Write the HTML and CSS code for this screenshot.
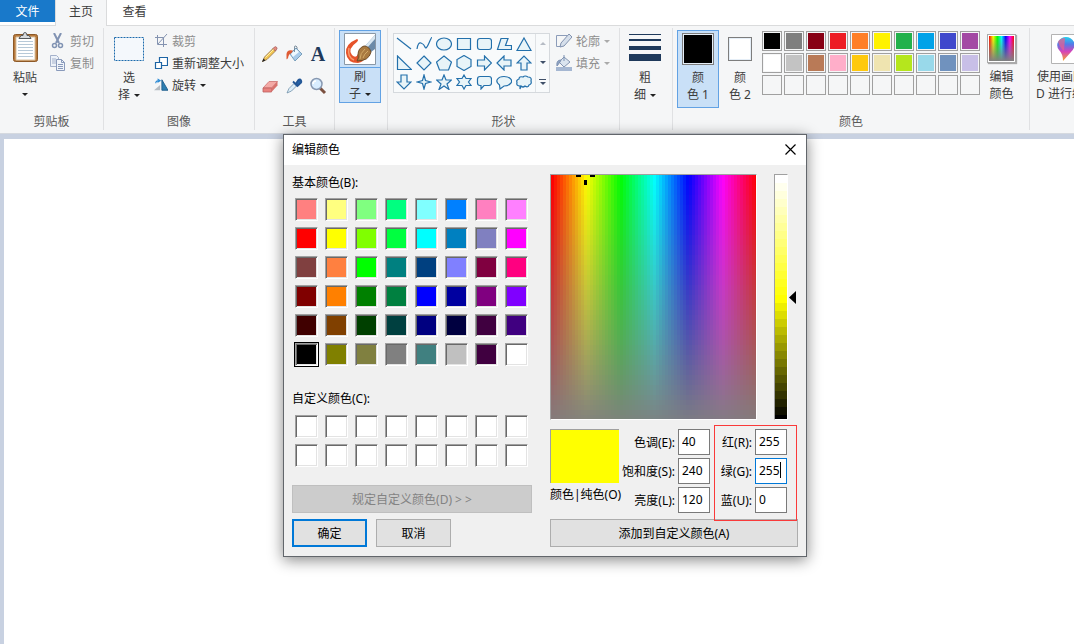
FILE: index.html
```html
<!DOCTYPE html>
<html lang="zh-CN">
<head>
<meta charset="utf-8">
<title>画图</title>
<link rel="stylesheet" href="styles.css">
</head>
<body>
<nav class="tabs">
  <button class="tab tab-file">文件</button>
  <button class="tab tab-active">主页</button>
  <button class="tab">查看</button>
</nav>

<header class="ribbon">
  <section class="group g-clipboard">
    <div class="tools">
      <button class="big">
        <svg class="icon-big" width="32" height="34" viewBox="0 0 32 34"><rect x="4.500" y="4.500" width="24" height="27" rx="2" fill="#b87a3d" stroke="#8d5927"/><path d="M7 7h19v23H7z" fill="#fff" stroke="#d9c3a4"/><path d="M9 11.500h15M9 14.500h15M9 17.500h15M9 20.500h15M9 23.500h15M9 26.500h15" stroke="#b7c9d8"/><path d="M10 8.500h12l-2-3h-2q0-3-2-3t-2 3h-2z" fill="#d6d9dc" stroke="#54585c"/></svg>
        <span>粘贴</span><i class="caret"></i>
      </button>
      <div class="rows">
        <button class="row off"><svg width="16" height="16" viewBox="0 0 16 16" fill="none"><path d="M4 0l5 10M11 0L6 10" stroke="#8193b3" stroke-width="2"/><circle cx="4.500" cy="12.500" r="2" stroke="#8193b3" stroke-width="1.500"/><circle cx="10.500" cy="12.500" r="2" stroke="#8193b3" stroke-width="1.500"/></svg>剪切</button>
        <button class="row off"><svg width="16" height="16" viewBox="0 0 16 16"><path d="M.5.500h6l2 2v9h-8z" fill="#edf2f9" stroke="#a4b1cb"/><path d="M2 4h4M2 6h4M2 8h4" stroke="#a4b1cb"/><path d="M6.500 4.500h5l3 3v8h-8z" fill="#f0f4fa" stroke="#899abb"/><path d="M11.500 4.500v3h3M8 9.500h5M8 11.500h5M8 13.500h5" fill="none" stroke="#899abb"/></svg>复制</button>
      </div>
    </div>
    <h2>剪贴板</h2>
  </section>

  <section class="group g-image">
    <div class="tools">
      <button class="big">
        <svg class="icon-big" width="32" height="34" viewBox="0 0 32 34"><rect x="1.500" y="7.500" width="29" height="23" fill="#f4f8fc" stroke="#1c6aac" stroke-dasharray="2 1"/></svg>
        <span>选</span><span>择<i class="caret"></i></span>
      </button>
      <div class="rows">
        <button class="row off"><svg width="14" height="14" viewBox="0 0 14 14" fill="none" stroke="#8493b0"><path d="M3.500 1v9.500H13M1 3.500h8.500V13M13 0L4 10"/></svg>裁剪</button>
        <button class="row"><svg width="14" height="14" viewBox="0 0 14 14" fill="#fff" stroke="#1d64a4" stroke-width="1.200"><path d="M5.500 1.500h8v8h-8z"/><path d="M1.500 6.500h6v6h-6z"/></svg>重新调整大小</button>
        <button class="row"><svg width="14" height="14" viewBox="0 0 16 14"><path d="M0 13L7 7v6z" fill="#b5bbc1"/><path d="M9 1v12h7z" fill="#2d7eb1" stroke="#1b5b8b"/><path d="M2 5q0-3 4-3M4 0l3 2-3 2" fill="none" stroke="#2788d4" stroke-width="1.300"/></svg>旋转<i class="caret"></i></button>
      </div>
    </div>
    <h2>图像</h2>
  </section>

  <section class="group g-tools">
    <div class="tools toolgrid">
      <button aria-label="铅笔"><svg width="18" height="18" viewBox="0 0 18 18"><path d="M1.500 16.500l2-4.500L12 3.500l2.500 2.500L6 14.500z" fill="#f2c552" stroke="#92734c" stroke-width=".8"/><path d="M1 17l1.500-3.500 2 2z" fill="#222"/><path d="M12 3.500l1.500-1.500q1-.8 2 .2t.2 2L14.500 6z" fill="#e58d80" stroke="#a55b59" stroke-width=".8"/><path d="M4.500 12.500l8-8" stroke="#fff1a8"/></svg></button>
      <button aria-label="填充"><svg width="18" height="18" viewBox="0 0 18 18"><path d="M5 9l6-6 6 6-7 7z" fill="#a9cbe9" stroke="#658fae" stroke-width=".8"/><path d="M6 9l5-5 3 3-6 5z" fill="#eff9ff"/><path d="M9.500 7V2q0-1.500 1.500-1t1 3" fill="none" stroke="#637a8b" stroke-width=".8"/><path d="M8 5.500Q2 4 1.500 9v5q1.500 1 2-3 .5-2 3-3z" fill="#df5b34"/></svg></button>
      <button class="letter" aria-label="文本">A</button>
      <button aria-label="橡皮擦"><svg width="18" height="18" viewBox="0 0 18 18"><path d="M2 11l6-6.500h8.500L10.500 11z" fill="#f4aaa6" stroke="#cd7171" stroke-width=".8"/><path d="M2 11h8.500v4H2z" fill="#e9827e" stroke="#bd6161" stroke-width=".8"/><path d="M10.500 11l6-6.500v4l-6 6.500z" fill="#d8736e"/></svg></button>
      <button aria-label="取色器"><svg width="18" height="18" viewBox="0 0 18 18"><path d="M2 16l2-4.500 5-5 2.500 2.500-5 5z" fill="#dfeffa" stroke="#6e8fa8" stroke-width=".8"/><path d="M8 4.500l5 5M11 6.500l2-3q2-2 3 0t-1 3l-2 2z" fill="#2866ac" stroke="#245796" stroke-width="1.800"/></svg></button>
      <button aria-label="放大镜"><svg width="18" height="18" viewBox="0 0 18 18"><path d="M11 11l5 5" stroke="#7b5140" stroke-width="3"/><circle cx="7.500" cy="7" r="5.500" fill="#d8edff" stroke="#8798b1" stroke-width="1.500"/><path d="M4 7q0-3 3-3" fill="none" stroke="#fff" stroke-width="1.500"/></svg></button>
    </div>
    <h2>工具</h2>
  </section>

  <section class="group g-brush">
    <button class="split">
      <span class="split-top"><svg width="32" height="32" viewBox="0 0 32 32"><path d="M.5.500h31v31H.5z" fill="#fff" stroke="#8a98a6"/><path d="M13 6Q1 11 2 20q1 10 12 10 6-1 6-5l-6-4q-2 5-6 1-5-6 5-13 2-2 0-3z" fill="#e6532a"/><path d="M5 15q-2 9 5 12" fill="none" stroke="#f79a6c" stroke-width="1.500"/><path d="M31 2v14l-4 3-6-6z" fill="#6b8aa8"/><path d="M31 2L21 13l2 2 8-9z" fill="#d9e7f1"/><path d="M20 13q5 0 7 6-2 9-14 9 2-3 1-6 0-7 6-9z" fill="#a97a40" stroke="#6d4b26"/><path d="M16 26q0-6 5-10M19 25q1-4 5-7" fill="none" stroke="#d3aa67"/></svg></span>
      <span>刷</span><span>子<i class="caret"></i></span>
    </button>
  </section>

  <section class="group g-shapes">
    <div class="tools">
      <div class="gallery">
        <div class="shapes" id="shapes"></div>
        <div class="scroll">
          <button aria-label="向上"><i class="caret up"></i></button>
          <button aria-label="向下"><i class="caret slate"></i></button>
          <button aria-label="更多"><i class="more"></i><i class="caret slate"></i></button>
        </div>
      </div>
      <div class="rows">
        <button class="row off"><svg width="16" height="16" viewBox="0 0 16 16"><path d="M11 2.500H.5v11h4" fill="none" stroke="#8c9cb9"/><path d="M4 14l1-4 8-9 3 3-8 9z" fill="#d6dfeb" stroke="#8292af"/></svg>轮廓<i class="caret"></i></button>
        <button class="row off"><svg width="16" height="16" viewBox="0 0 16 16"><path d="M3 7l5-5 6 5-6 5z" fill="#dae4ef" stroke="#8495b2"/><path d="M8 0v6M5 5Q0 5 1 11l3-4z" fill="#8fa3c3" stroke="#7d91b2"/><path d="M0 12h16v4H0z" fill="#a5b7d2"/></svg>填充<i class="caret"></i></button>
      </div>
    </div>
    <h2>形状</h2>
  </section>

  <section class="group g-size">
    <button class="big">
      <svg class="icon-big" width="32" height="34" viewBox="0 0 32 34" fill="#1e395b"><path d="M0 4h32v1H0zM0 9h32v2H0zM0 16h32v4H0zM0 24h32v7H0z"/></svg>
      <span>粗</span><span>细<i class="caret"></i></span>
    </button>
  </section>

  <section class="group g-colors">
    <div class="tools">
      <button class="current current-active"><span class="well well-black"></span><span>颜</span><span>色 1</span></button>
      <button class="current"><span class="well well-white"></span><span>颜</span><span>色 2</span></button>
      <div class="palette" id="palette"></div>
      <button class="edit"><span class="rainbow"></span><span>编辑</span><span>颜色</span></button>
    </div>
    <h2>颜色</h2>
  </section>

  <section class="group g-3d">
    <button class="edit">
      <svg class="p3d" width="30" height="30" viewBox="0 0 30 30"><defs><linearGradient id="pin" x1="0" y1="0" x2="0" y2="1"><stop offset="0" stop-color="#22d0ee"/><stop offset=".3" stop-color="#537be8"/><stop offset=".6" stop-color="#d543b9"/><stop offset="1" stop-color="#f5a72c"/></linearGradient></defs><path d="M.5.500h29v29H.5z" fill="#fff" stroke="#b3b3b3"/><path d="M12 27q0-7-4-11-3-4-1-8 3-5 8-5t8 5q2 5-3 10z" fill="url(#pin)"/><path d="M7 8q2 6 6 9l1-13q-5 0-7 4z" fill="#ef5d8b" opacity=".7"/></svg>
      <span>使用画图 3</span><span>D 进行编辑</span>
    </button>
  </section>
</header>

<main class="workspace"><div class="paper"></div></main>

<div class="dialog" role="dialog" aria-labelledby="dlg-title">
  <div class="titlebar"><span id="dlg-title">编辑颜色</span>
    <button class="close" aria-label="关闭"><svg width="11" height="11" viewBox="0 0 11 11"><path d="M.5.500l10 10M10.500.500l-10 10" stroke="#000" stroke-width="1.200"/></svg></button>
  </div>
  <div class="body">
    <div class="left">
      <h3>基本颜色(B):</h3>
      <div class="swatches" id="basic"></div>
      <h3 class="custom-title">自定义颜色(C):</h3>
      <div class="swatches" id="custom"></div>
      <button class="btn define" disabled>规定自定义颜色(D) &gt; &gt;</button>
      <div class="actions"><button class="btn primary">确定</button><button class="btn">取消</button></div>
    </div>
    <div class="right">
      <div class="pickers">
        <div class="spectrum"><canvas id="spectrum" width="205" height="244"></canvas><svg class="cross" width="20" height="12" viewBox="0 0 20 12"><path d="M0 0h5v2H0zM14 0h5v2h-5zM8 5h3v5H8z"/></svg></div>
        <div class="lum"><canvas id="lum" width="12" height="244"></canvas></div>
        <svg class="arrow" width="7" height="13" viewBox="0 0 7 13"><path d="M7 0v13L0 6.500z"/></svg>
      </div>
      <div class="values">
        <div class="preview"><div class="solid"></div><span>颜色|纯色(O)</span></div>
        <div class="fields hsl">
          <label for="f-h">色调(E):</label><input id="f-h" value="40">
          <label for="f-s">饱和度(S):</label><input id="f-s" value="240">
          <label for="f-l">亮度(L):</label><input id="f-l" value="120">
        </div>
        <div class="fields rgb">
          <label for="f-r">红(R):</label><input id="f-r" value="255">
          <label for="f-g">绿(G):</label><span class="editing"><input id="f-g" value="255"></span>
          <label for="f-b">蓝(U):</label><input id="f-b" value="0">
        </div>
      </div>
      <button class="btn add">添加到自定义颜色(A)</button>
    </div>
  </div>
</div>
<script src="app.js"></script>
</body>
</html>
```
FILE: styles.css
```css
* { box-sizing: border-box; }
body {
  margin: 0;
  min-height: 100vh;
  display: flex;
  flex-direction: column;
  overflow: hidden;
  position: relative;
  background: #fff;
  color: #3c3c3c;
  font: 12px/17px "Noto Sans", "Noto Sans CJK SC", sans-serif;
}
button, input { font: inherit; color: inherit; }
button { padding: 0; border: 0; background: none; white-space: nowrap; }
svg, canvas { display: block; flex: none; }
h2, h3 { margin: 0; font-size: 12px; font-weight: 400; }

.tabs { display: flex; height: 26px; border-bottom: 1px solid #dadbdc; }
.tab { width: 55px; height: 22px; }
.tab-file { background: #1979ca; color: #fff; }
.tab-active {
  width: 52px;
  height: 26px;
  padding-bottom: 4px;
  background: #f5f6f7;
  border: solid #dadbdc;
  border-width: 0 1px;
}

.ribbon {
  display: flex;
  height: 108px;
  padding: 2px 0 3px;
  background: #f5f6f7;
  border-bottom: 1px solid #d5d9df;
  overflow: hidden;
}
.group {
  flex: none;
  display: flex;
  flex-direction: column;
  justify-content: space-between;
  border-right: 1px solid #e0e1e3;
}
.group h2 { text-align: center; color: #5a5a5a; }
.tools { display: flex; align-items: flex-start; }
.g-clipboard { width: 104px; }
.g-image { width: 151px; }
.g-tools { width: 80px; }
.g-brush { width: 53px; }
.g-shapes { width: 232px; }
.g-size { width: 53px; }
.g-colors { width: 357px; }
.g-3d { width: 72px; border: 0; }

.caret {
  display: inline-block;
  border: solid transparent;
  border-width: 3px 3px 0;
  border-top-color: #222;
}
span > .caret, .row .caret { margin-left: 4px; vertical-align: middle; }
.off .caret { border-top-color: #aaa; }
.slate { border-top-color: #3f5069; }
.up { border-width: 0 3px 3px; border-bottom-color: #b6bcc5; }

.big { display: flex; flex-direction: column; align-items: center; width: 50px; padding-top: 2px; }
.big .icon-big { margin-bottom: 5px; }
.big > .caret { margin-top: 7px; }
.rows { display: flex; flex-direction: column; padding-top: 2px; }
.row { display: flex; align-items: center; gap: 4px; height: 22px; }
.row .caret { margin-left: 0; }
.off { color: #8d8d8d; }

.toolgrid { display: grid; grid-template-columns: repeat(3, 18px); gap: 14px 6px; padding: 17px 0 0 6px; }
.letter { height: 18px; font: bold 20px/18px "Liberation Serif", serif; color: #1e395b; }

.split {
  width: 42px;
  margin: 2px 0 0 4px;
  display: flex;
  flex-direction: column;
  align-items: center;
  background: #c9e0f7;
  border: 1px solid #62a2e4;
}
.split-top { align-self: stretch; display: flex; justify-content: center; padding: 2px 0; border-bottom: 1px solid #62a2e4; }

.gallery { display: flex; width: 157px; height: 60px; margin: 5px 6px 0 5px; border: 1px solid #d5d9dd; background: #f8fafb; }
.shapes { display: grid; grid-template-columns: repeat(7, 20px); grid-auto-rows: 19px; flex: 1; }
.shapes button { display: grid; place-items: center; }
.scroll { width: 14px; display: flex; flex-direction: column; border-left: 1px solid #dfe2e5; }
.scroll button { flex: 1; display: flex; flex-direction: column; align-items: center; justify-content: center; gap: 2px; }
.more { width: 7px; height: 1px; background: #3f5069; }

.current { width: 42px; height: 78px; margin-top: 2px; display: flex; flex-direction: column; align-items: center; border: 1px solid transparent; }
.g-colors .tools { padding-left: 4px; }
.current-active { background: #c9e0f7; border-color: #62a2e4; }
.well { width: 32px; height: 32px; margin: 2px 0 4px; border: 1px solid #7d7d7d; box-shadow: inset 0 0 0 1px #e5eef7; }
.well-black { background: #000; }
.well-white { width: 24px; height: 24px; margin: 6px 0 8px; background: #fff; }
.palette { display: grid; grid-template-columns: repeat(10, 20px); grid-auto-rows: 20px; gap: 2px; margin: 3px 0 0 1px; }
.palette button { border: 1px solid #a0a0a0; padding: 1px; background-clip: content-box; }
.edit { display: flex; flex-direction: column; align-items: center; padding-top: 6px; }
.g-colors .edit { margin-left: 7px; }
.rainbow {
  width: 29px;
  height: 29px;
  margin-bottom: 5px;
  border: 1px solid #aaa;
  padding: 1px;
  background: linear-gradient(transparent, #808080) content-box, linear-gradient(90deg, red, #ff0, lime, cyan, blue, magenta, red) content-box, #fff;
  box-shadow: 1px 1px 1px #aaa;
}
.p3d { margin-bottom: 4px; }

.workspace { flex: 1; display: flex; padding: 5px 0 0 4px; background: #c8d1e1; }
.paper { flex: 1; background: #fff; }

/* modal window floating over the canvas */
.dialog {
  position: absolute;
  left: 283px;
  top: 134px;
  width: 524px;
  border: 1px solid #62666b;
  background: #f0f0f0;
  color: #000;
  box-shadow: 0 3px 14px rgba(0, 0, 0, .48);
}
.titlebar { display: flex; align-items: center; justify-content: space-between; height: 30px; padding: 0 10px 2px 8px; background: #fff; }
.body { display: flex; justify-content: space-between; padding: 9px 8px; }
.left { width: 240px; display: flex; flex-direction: column; }
.swatches { display: grid; grid-template-columns: repeat(8, 23px); grid-auto-rows: 23px; gap: 6px 7px; margin: 7px 0 0 3px; }
.swatches button {
  border: 1px solid;
  border-color: #a0a0a0 #fff #fff #a0a0a0;
  box-shadow: inset 1px 1px #696969, inset -1px -1px #e3e3e3;
}
.swatches .chosen { outline: 1px solid #000; }
.custom-title { margin-top: 24px; }
#custom { margin-top: 8px; }
.btn { height: 28px; border: 1px solid #adadad; background: #e1e1e1; }
.define { margin-top: 18px; border-color: #bfbfbf; background: #ccc; color: #838383; }
.actions { display: flex; gap: 9px; margin-top: 6px; }
.actions .btn { width: 75px; }
.actions .primary { border: 2px solid #0078d7; }

.right { width: 248px; display: flex; flex-direction: column; }
.pickers { display: flex; align-items: center; }
.spectrum, .lum { border: 1px solid; border-color: #a0a0a0 #fff #fff #a0a0a0; }
.spectrum { position: relative; margin-right: 17px; }
.cross { position: absolute; left: 25px; top: 0; }
.arrow { margin-left: 1px; }
.values { display: flex; margin-top: 9px; }
.preview { width: 69px; white-space: nowrap; }
.solid { height: 54px; margin-bottom: 3px; background: #ff0; border: solid #a0a0a0; border-width: 1px 0 0 1px; }
.fields { display: grid; grid-auto-rows: 26px; gap: 3px; align-items: center; justify-items: end; white-space: nowrap; }
.hsl { grid-template-columns: 56px 32px; }
.rgb { grid-template-columns: 32px 32px; margin-left: 10px; position: relative; }
.rgb::before {
  content: "";
  position: absolute;
  inset: -4px -10px -8px -6px;
  border: 1px solid #fa3a3a;
  pointer-events: none;
}
.fields input { width: 32px; height: 26px; padding: 0 0 2px 3px; border: 1px solid #7a7a7a; border-radius: 0; background: #fff; outline: 0; }
.editing { position: relative; }
.editing input { display: block; border-color: #0078d7; }
.editing::after { content: ""; position: absolute; left: 25px; top: 4px; width: 1px; height: 16px; background: #000; }
.add { margin-top: 6px; }
```
FILE: app.js
```js
const fill = (id, colors, names) => {
  const host = document.getElementById(id);
  colors.forEach((color, i) => {
    const b = document.createElement('button');
    b.setAttribute('aria-label', names + ' ' + (i + 1));
    b.style.backgroundColor = color;
    host.append(b);
  });
  return host;
};
fill('palette', ('#000 #7f7f7f #880015 #ed1c24 #ff7f27 #fff200 #22b14c #00a2e8 #3f48cc #a349a4 ' +
  '#fff #c3c3c3 #b97a57 #ffaec9 #ffc90e #efe4b0 #b5e61d #99d9ea #7092be #c8bfe7').split(' ')
  .concat(Array(10).fill('#f5f6f7')), '颜色');
const basic = fill('basic', ('#ff8080 #ffff80 #80ff80 #00ff80 #80ffff #0080ff #ff80c0 #ff80ff ' +
  '#ff0000 #ffff00 #80ff00 #00ff40 #00ffff #0080c0 #8080c0 #ff00ff ' +
  '#804040 #ff8040 #00ff00 #008080 #004080 #8080ff #800040 #ff0080 ' +
  '#800000 #ff8000 #008000 #008040 #0000ff #0000a0 #800080 #8000ff ' +
  '#400000 #804000 #004000 #004040 #000080 #000040 #400040 #400080 ' +
  '#000000 #808000 #808040 #808080 #408080 #c0c0c0 #400040 #ffffff').split(' '), '基本颜色');
basic.children[40].className = 'chosen';
fill('custom', Array(16).fill('#fff'), '自定义颜色');

// [label, path] in a 16 x 16 box
const shapes = [
  ['直线', 'M1 2l14 11'],
  ['曲线', 'M1 13Q2 6 5 7t4 4 4-4 3-5'],
  ['椭圆', 'M.5 8a7.500 6 0 1 0 15 0a7.500 6 0 1 0-15 0z'],
  ['矩形', 'M1.500 2.500h13v11h-13z'],
  ['圆角矩形', 'M4 2.500h9q2.500 0 2.500 2.500v6q0 2.500-2.500 2.500H4Q1.500 13.500 1.500 11V5Q1.500 2.500 4 2.500z'],
  ['多边形', 'M5 2.500h7L9.500 9.500h6v4h-14z'],
  ['三角形', 'M8 2l7 12.500H1z'],
  ['直角三角形', 'M1.500 1v13.500h14z'],
  ['菱形', 'M8 1l7 7-7 7-7-7z'],
  ['五边形', 'M8 1l7.500 6-3 8h-9l-3-8z'],
  ['六边形', 'M8 .500l7 4v7l-7 4-7-4v-7z'],
  ['右箭头', 'M1.500 5h7V1l7 7-7 7v-4h-7z'],
  ['左箭头', 'M15 5H8V1L1 8l7 7v-4h7z'],
  ['上箭头', 'M5 15V8H1l7-7 7 7h-4v7z'],
  ['下箭头', 'M5 1v7H1l7 7 7-7h-4V1z'],
  ['四角星', 'M8 1l1.500 5.500L15 8 9.500 9.500 8 15 6.500 9.500 1 8l5.500-1.500z'],
  ['五角星', 'M8 1l2 5h5.500l-4.500 4 2 5.500L8 12l-5 3.500L5 10 .5 6H6z'],
  ['六角星', 'M8 1l2 3.500h5L12.500 8l2.500 3.500h-5L8 15l-2-3.500H1L3.500 8 1 4.500h5z'],
  ['圆角标注', 'M4 2.500h9q2.500 0 2.500 2.500v4q0 2.500-2.500 2.500H8l-3 3.500v-3.500H4q-2.500 0-2.500-2.500V5Q1.500 2.500 4 2.500z'],
  ['椭圆标注', 'M3.500 11C-2 7 2 2.500 8 2.500s9.500 4 6.500 7Q12 12 8 12l-4 3z'],
  ['云形标注', 'M4 12Q0 12 1 8.500 0 6 3 5q0-3 4-2 2-2 5 0 4 0 3 4 1 3-2 4-1 3-4 1-2 2-4 0l-1 3z']
];
document.getElementById('shapes').innerHTML = shapes.map(([name, d], i) =>
  `<button aria-label="${name}"><svg width="16" height="16" viewBox="0 0 16 16"><path d="${d}" fill="${i < 2 ? 'none' : '#e8f4f8'}" stroke="#2370ab" stroke-width="1.2"/></svg></button>`).join('');

const spectrum = document.getElementById('spectrum').getContext('2d');
for (let x = 0; x < 205; x += 3) {
  for (let y = 0; y < 244; y += 5) {
    spectrum.fillStyle = `hsl(${x / 204 * 360} ${100 - y / 243 * 97}% 50%)`;
    spectrum.fillRect(x, y, 3, 5);
  }
}
const lum = document.getElementById('lum').getContext('2d');
for (let y = 0; y < 244; y += 8) {
  lum.fillStyle = `hsl(60 100% ${100 - y / 240 * 100}%)`;
  lum.fillRect(0, y, 12, 8);
}
```
